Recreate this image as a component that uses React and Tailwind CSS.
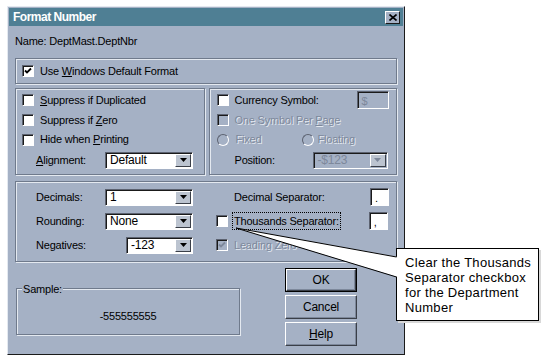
import React from 'react';

const font = { fontFamily: '"Liberation Sans", Arial, sans-serif' };

function Check({ checked, disabled }) {
    return (
        <div
            className={`w-[12px] h-[12px] shrink-0 border border-t-[#5c6270] border-l-[#5c6270] border-r-white border-b-white shadow-[inset_1px_1px_0_#1a1a1a] flex items-center justify-center ${disabled ? 'bg-[#a5b1c5]' : 'bg-white'}`}
        >
            {checked && (
                <svg width="8" height="8" viewBox="0 0 8 8">
                    <path d="M1 3.5 L3 5.5 L7 1.5" stroke={disabled ? '#7d889b' : '#000'} strokeWidth="1.8" fill="none" />
                </svg>
            )}
        </div>
    );
}

function Radio() {
    return (
        <div className="w-[12px] h-[12px] shrink-0 rounded-full border border-t-[#5c6270] border-l-[#5c6270] border-r-white border-b-white bg-[#a5b1c5]" />
    );
}

function Arrow({ disabled }) {
    return (
        <div className="w-[16px] h-full shrink-0 bg-[#bcc4d0] border border-t-white border-l-white border-r-[#3a3f48] border-b-[#3a3f48] flex items-center justify-center">
            <svg width="7" height="4" viewBox="0 0 7 4">
                <path d="M0 0 H7 L3.5 4 Z" fill={disabled ? '#7d889b' : '#000'} />
            </svg>
        </div>
    );
}

function Combo({ value, width, disabled }) {
    return (
        <div
            className={`h-[17px] flex items-stretch border border-t-[#5c6270] border-l-[#5c6270] border-r-white border-b-white shadow-[inset_1px_1px_0_#1a1a1a] p-[1px] pl-[2px] ${disabled ? 'bg-[#a5b1c5]' : 'bg-white'}`}
            style={{ width }}
        >
            <div className={`flex-1 flex items-center pl-[2px] text-[12px] ${disabled ? 'text-[#7d889b]' : 'text-black'}`}>{value}</div>
            <Arrow disabled={disabled} />
        </div>
    );
}

function TextBox({ value, width, disabled }) {
    return (
        <div
            className={`h-[18px] flex items-end pb-[1px] pl-[4px] border border-t-[#5c6270] border-l-[#5c6270] border-r-white border-b-white shadow-[inset_1px_1px_0_#1a1a1a] text-[11px] leading-none ${disabled ? 'bg-[#a5b1c5] text-[#7d889b] items-center pb-0' : 'bg-white text-black'}`}
            style={{ width }}
        >
            {value}
        </div>
    );
}

function Group({ className, children }) {
    return (
        <div className={`border border-[#6f7a8c] shadow-[inset_1px_1px_0_#e4e9f0,1px_1px_0_#e4e9f0] ${className}`}>
            {children}
        </div>
    );
}

function Btn({ children, isDefault }) {
    return (
        <div className={`w-[72px] h-[24px] ${isDefault ? 'border border-black' : ''}`}>
            <div className="w-full h-full bg-[#a5b1c5] border border-t-white border-l-white border-r-[#3a3f48] border-b-[#3a3f48] shadow-[inset_-1px_-1px_0_#7d889b] flex items-center justify-center text-[12px]">
                {children}
            </div>
        </div>
    );
}

export default function App() {
    const dis = 'text-[#7d889b] [text-shadow:1px_1px_0_#e4e9f0]';

    return (
        <div className="relative w-[545px] h-[361px] bg-white overflow-hidden text-black text-[11px] tracking-[-0.2px]" style={font}>
            {/* dialog */}
            <div className="ml-[7px] mt-[6px] w-[398px] h-[349px] bg-[#a5b1c5] border border-t-[#e4e9f0] border-l-[#e4e9f0] border-r-[#1a1a1a] border-b-[#1a1a1a] flex flex-col">
                <div className="mx-[1px] mt-[1px] h-[18px] bg-[#4f7f94] flex items-center justify-between pl-[4px] pr-[3px]">
                    <span className="text-white font-bold text-[12px] tracking-[-0.5px]">Format Number</span>
                    <div className="w-[15px] h-[13px] bg-[#a5b1c5] border border-t-white border-l-white border-r-[#1a1a1a] border-b-[#1a1a1a] flex items-center justify-center">
                        <svg width="8" height="7" viewBox="0 0 8 7">
                            <path d="M0.5 0.5 L7.5 6.5 M7.5 0.5 L0.5 6.5" stroke="#000" strokeWidth="1.6" />
                        </svg>
                    </div>
                </div>

                <div className="px-[7px] flex flex-col">
                    <div className="mt-[8px] h-[14px] flex items-center">Name: DeptMast.DeptNbr</div>

                    <Group className="mt-[10px] h-[26px] flex items-center pl-[6px] gap-[6px]">
                        <Check checked />
                        <span>Use <u>W</u>indows Default Format</span>
                    </Group>

                    <div className="mt-[4px] flex gap-[4px]">
                        <Group className="w-[190px] h-[87px] pt-[1px] pl-[6px] flex flex-col">
                            <div className="h-[20px] flex items-center gap-[6px]"><Check /><span><u>S</u>uppress if Duplicated</span></div>
                            <div className="h-[20px] flex items-center gap-[6px]"><Check /><span>Suppress if <u>Z</u>ero</span></div>
                            <div className="h-[19px] flex items-center gap-[6px]"><Check /><span>Hide when <u>P</u>rinting</span></div>
                            <div className="h-[22px] flex items-center pl-[14px]">
                                <span className="w-[69px]"><u>A</u>lignment:</span>
                                <Combo value="Default" width={88} />
                            </div>
                        </Group>
                        <Group className="w-[189px] h-[87px] pt-[1px] pl-[7px] flex flex-col">
                            <div className="h-[20px] flex items-center">
                                <Check />
                                <span className="ml-[6px] w-[122px]">Currency Symbol:</span>
                                <TextBox value="$" width={32} disabled />
                            </div>
                            <div className="h-[20px] flex items-center gap-[6px]">
                                <Check disabled />
                                <span className={dis}>One Symbol Per <u>P</u>age</span>
                            </div>
                            <div className="h-[19px] flex items-center">
                                <Radio />
                                <span className={`ml-[7px] w-[66px] ${dis}`}>Fixed</span>
                                <Radio />
                                <span className={`ml-[4px] ${dis}`}>Floating</span>
                            </div>
                            <div className="h-[22px] flex items-center pl-[18px]">
                                <span className="w-[78px]">Position:</span>
                                <Combo value="-$123" width={75} disabled />
                            </div>
                        </Group>
                    </div>

                    <Group className="mt-[6px] h-[81px] pt-[3px] flex flex-col">
                        <div className="h-[24px] flex items-center">
                            <div className="w-[200px] flex items-center pl-[20px]">
                                <span className="w-[69px]">Decimals:</span>
                                <Combo value="1" width={88} />
                            </div>
                            <div className="flex items-center">
                                <span className="ml-[18px] w-[136px]">Decimal Separator:</span>
                                <TextBox value="." width={19} />
                            </div>
                        </div>
                        <div className="h-[24px] flex items-center">
                            <div className="w-[200px] flex items-center pl-[20px]">
                                <span className="w-[69px]">Rounding:</span>
                                <Combo value="None" width={88} />
                            </div>
                            <div className="flex items-center">
                                <Check />
                                <span className="ml-[4px] px-[1px] border border-dotted border-black">Thousands Separator:</span>
                                <span className="w-[28px]" />
                                <TextBox value="," width={19} />
                            </div>
                        </div>
                        <div className="h-[24px] flex items-center">
                            <div className="w-[200px] flex items-center pl-[20px]">
                                <span className="w-[90px]">Negatives:</span>
                                <Combo value="-123" width={67} />
                            </div>
                            <div className="flex items-center gap-[6px]">
                                <Check checked disabled />
                                <span className={dis}>Leading Zero</span>
                            </div>
                        </div>
                    </Group>

                    <div className="flex">
                        <Group className="relative ml-[1px] mt-[26px] w-[224px] h-[47px] flex items-center justify-center pt-[10px]">
                            <span className="absolute left-[5px] top-[-8px] bg-[#a5b1c5] px-[1px]">Sample:</span>
                            <span>-555555555</span>
                        </Group>
                        <div className="ml-[45px] mt-[6px] flex flex-col gap-[3px]">
                            <Btn isDefault>OK</Btn>
                            <Btn>Cancel</Btn>
                            <Btn><u>H</u>elp</Btn>
                        </div>
                    </div>
                </div>
            </div>

            {/* callout */}
            <div className="absolute left-[396px] top-[248px] w-[143px] h-[73px] bg-white border border-black pl-[8px] pt-[6px] text-[13px] leading-[15px] tracking-[0.3px] shadow-[2px_2px_0_#d8d8d8]">
                Clear the Thousands Separator checkbox for the Department Number
            </div>
            <svg className="absolute left-0 top-0 pointer-events-none" width="545" height="361">
                <polygon points="236,228 397.5,257 397.5,277" fill="#fff" />
                <path d="M236 228 L396.5 257 M236 228 L396.5 277" stroke="#000" strokeWidth="1" fill="none" />
            </svg>
        </div>
    );
}
